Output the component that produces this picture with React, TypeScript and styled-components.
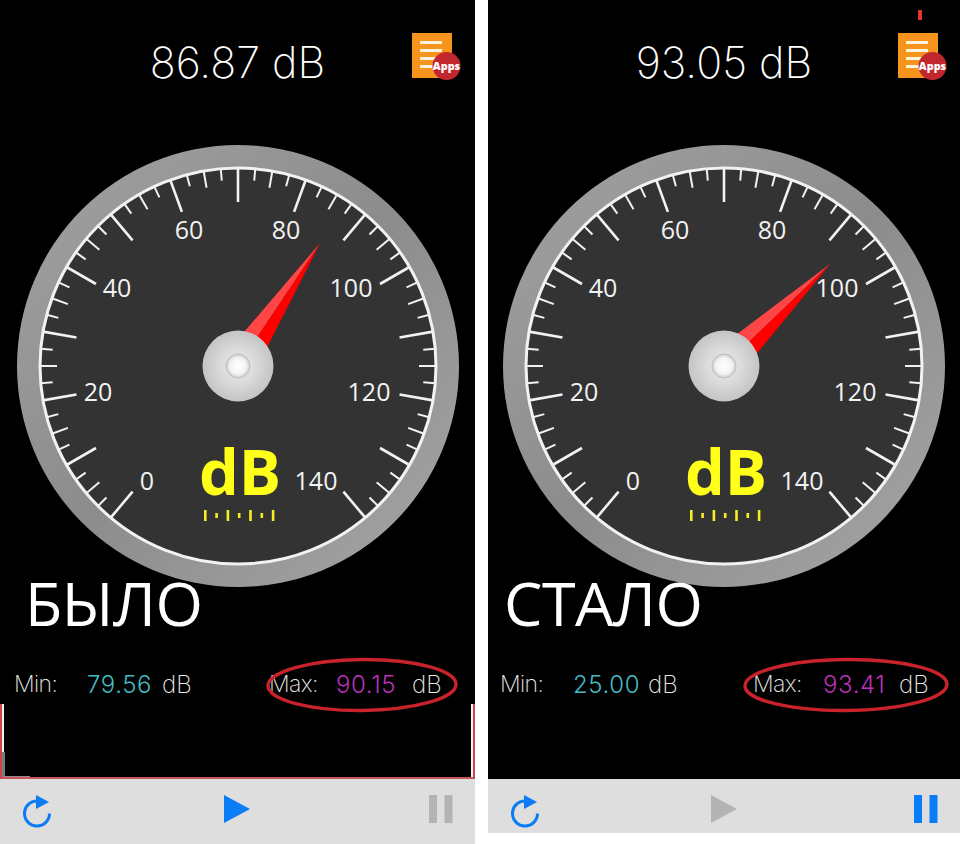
import React from "react";
import styled, { createGlobalStyle } from "styled-components";

const TICK_LABELS = [
  { text: "0", dx: -91, dy: 115 },
  { text: "20", dx: -140, dy: 26 },
  { text: "40", dx: -121, dy: -78 },
  { text: "60", dx: -49, dy: -136 },
  { text: "80", dx: 48, dy: -136 },
  { text: "100", dx: 113, dy: -78 },
  { text: "120", dx: 131, dy: 26 },
  { text: "140", dx: 78, dy: 115 },
];

const CX = 238;
const CY = 226;

// scale runs from -140deg (0 dB) to +140deg (140 dB), one tick per 2.5 dB
const ticks = Array.from({ length: 57 }, (_, i) => {
  const angle = -140 + i * 5;
  const length = i % 4 === 0 ? 34 : i % 2 === 0 ? 17 : 12;
  return { angle, length, major: i % 4 === 0 };
});

const ruler = [0, 1, 2, 3, 4, 5, 6];

const Gauge = ({ angle, recording }: { angle: number; recording?: boolean }) => (
  <GaugeSvg viewBox="0 0 475 450" $recording={recording}>
    <defs>
      <linearGradient id="bezel" x1="0" y1="0" x2="1" y2="1">
        <stop offset="0" stopColor="#a2a2a2" />
        <stop offset="0.5" stopColor="#8c8c8c" />
        <stop offset="1" stopColor="#a6a6a6" />
      </linearGradient>
      <radialGradient id="hub" cx="0.5" cy="0.5" r="0.5">
        <stop offset="0" stopColor="#f0f0f0" />
        <stop offset="1" stopColor="#c4c4c4" />
      </radialGradient>
      <radialGradient id="cap" cx="0.5" cy="0.5" r="0.5">
        <stop offset="0" stopColor="#ffffff" />
        <stop offset="0.7" stopColor="#f2f2f2" />
        <stop offset="1" stopColor="#c8c8c8" />
      </radialGradient>
    </defs>
    <circle cx={CX} cy={CY} r={221} fill="url(#bezel)" />
    <circle cx={CX} cy={CY} r={198} fill="#333333" stroke="#f2f2f2" strokeWidth={3} />
    {ticks.map((t) => (
      <line
        key={t.angle}
        x1={CX}
        y1={CY - 198}
        x2={CX}
        y2={CY - 198 + t.length}
        stroke="#f2f2f2"
        strokeWidth={t.major ? 2.6 : 2}
        transform={`rotate(${t.angle} ${CX} ${CY})`}
      />
    ))}
    {TICK_LABELS.map((l) => (
      <ScaleLabel key={l.text} x={CX + l.dx} y={CY + l.dy + 9}>
        {l.text}
      </ScaleLabel>
    ))}
    <g transform={`rotate(${angle} ${CX} ${CY})`}>
      <polygon points={`${CX},${CY - 148} ${CX - 14},${CY - 30} ${CX},${CY - 30}`} fill="#ff4646" />
      <polygon points={`${CX},${CY - 148} ${CX + 14},${CY - 30} ${CX},${CY - 30}`} fill="#ff0000" />
    </g>
    <circle cx={CX} cy={CY} r={35.5} fill="url(#hub)" />
    <circle cx={CX} cy={CY} r={12} fill="url(#cap)" stroke="#c0c0c0" strokeWidth={1} />
    <UnitLabel x={CX + 2} y={355}>dB</UnitLabel>
    {ruler.map((i) => (
      <rect
        key={i}
        x={204 + i * 11.3}
        y={i % 2 === 0 ? 370 : 373}
        width={2.6}
        height={i % 2 === 0 ? 11 : 5}
        fill="#f5ee20"
      />
    ))}
  </GaugeSvg>
);

const AppsBadge = ({ recording }: { recording?: boolean }) => (
  <BadgeSvg viewBox="0 0 50 47" $recording={recording}>
    <rect x="0" y="0" width="40" height="45" fill="#f7941e" />
    <rect x="8" y="8" width="22" height="3" fill="#fdf2dc" />
    <rect x="8" y="16" width="22" height="3" fill="#fdf2dc" />
    <rect x="8" y="24" width="22" height="3" fill="#fdf2dc" />
    <rect x="8" y="32" width="22" height="3" fill="#fdf2dc" />
    <circle cx="34.5" cy="33" r="14" fill="#c1272d" />
    <BadgeText x="34.5" y="36.8">Apps</BadgeText>
  </BadgeSvg>
);

const RefreshIcon = () => (
  <svg width="30" height="33" viewBox="0 0 30 33">
    <path d="M26.5 18.5A12.5 12.5 0 1 1 14 6" fill="none" stroke="#0a7cf5" strokeWidth="3" />
    <polygon points="13,0 26,7 13,14" fill="#0a7cf5" />
  </svg>
);

const PlayIcon = ({ color }: { color: string }) => (
  <PlaySvg viewBox="0 0 26 28">
    <polygon points="0,0 26,14 0,28" fill={color} />
  </PlaySvg>
);

const PauseIcon = ({ color }: { color: string }) => (
  <svg width="24" height="28" viewBox="0 0 24 28">
    <rect x="0" y="0" width="8" height="28" fill={color} />
    <rect x="15.5" y="0" width="8" height="28" fill={color} />
  </svg>
);

interface MeterProps {
  reading: string;
  angle: number;
  caption: string;
  min: string;
  max: string;
  recording?: boolean;
}

const Meter = ({ reading, angle, caption, min, max, recording }: MeterProps) => {
  const ringWidth = recording ? 206 : 192;
  return (
    <Panel $recording={recording}>
      {recording && <LevelMark />}
      <Header>
        <span />
        <Reading>{reading} dB</Reading>
        <AppsBadge recording={recording} />
      </Header>
      <Gauge angle={angle} recording={recording} />
      <Caption $recording={recording}>{caption}</Caption>
      <Stats $recording={recording}>
        <Label>Min:</Label>
        <MinValue>{min}</MinValue>
        <Unit>dB</Unit>
        <MaxLabel $recording={recording}>Max:</MaxLabel>
        <MaxValue>{max}</MaxValue>
        <Unit>dB</Unit>
        <Circled viewBox={`0 0 ${ringWidth} 56`} $width={ringWidth} $recording={recording}>
          <ellipse
            cx={ringWidth / 2}
            cy="28"
            rx={ringWidth / 2 - 2}
            ry="25.5"
            fill="none"
            stroke="#c8222b"
            strokeWidth="3.4"
          />
        </Circled>
      </Stats>
      <Graph $active={!recording}>{!recording && <GraphLevel />}</Graph>
      <Toolbar>
        <RefreshIcon />
        <PlayIcon color={recording ? "#b3b3b3" : "#0a7cf5"} />
        <PauseIcon color={recording ? "#0a7cf5" : "#b3b3b3"} />
      </Toolbar>
    </Panel>
  );
};

const App = () => (
  <>
    <GlobalStyle />
    <Root>
      <Meter reading="86.87" angle={33.74} caption="БЫЛО" min="79.56" max="90.15" />
      <Meter reading="93.05" angle={46.1} caption="СТАЛО" min="25.00" max="93.41" recording />
    </Root>
  </>
);

const GlobalStyle = createGlobalStyle`
  html, body {
    margin: 0;
    padding: 0;
    background: #ffffff;
  }
`;

const Root = styled.div`
  display: flex;
  justify-content: space-between;
  align-items: flex-start;
  width: 960px;
  height: 844px;
  overflow: hidden;
  background: #ffffff;
`;

const Panel = styled.div<{ $recording?: boolean }>`
  position: relative;
  display: flex;
  flex-direction: column;
  width: ${(p) => (p.$recording ? "472px" : "475px")};
  height: ${(p) => (p.$recording ? "833px" : "844px")};
  background: #000000;
`;

const LevelMark = styled.div`
  position: absolute;
  top: 10px;
  left: 430px;
  width: 4px;
  height: 10px;
  background: #e5352b;
`;

const Header = styled.div`
  display: grid;
  grid-template-columns: 1fr auto 1fr;
  align-items: start;
  height: 140px;
`;

const Reading = styled.div`
  margin-top: 38px;
  font-family: "Inter", "Liberation Sans", sans-serif;
  font-size: 43px;
  line-height: 48px;
  font-weight: 200;
  color: #ffffff;
  white-space: nowrap;
`;

const BadgeSvg = styled.svg<{ $recording?: boolean }>`
  justify-self: end;
  width: 50px;
  height: 47px;
  margin: 33px ${(p) => (p.$recording ? "12px" : "13px")} 0 0;
`;

const BadgeText = styled.text`
  font-family: "Open Sans", sans-serif;
  font-size: 10.8px;
  font-weight: 800;
  fill: #ffffff;
  text-anchor: middle;
`;

const GaugeSvg = styled.svg<{ $recording?: boolean }>`
  display: block;
  width: 475px;
  height: 450px;
  flex-shrink: 0;
  margin-left: ${(p) => (p.$recording ? "-2px" : "0")};
`;

const ScaleLabel = styled.text`
  font-family: "Open Sans", sans-serif;
  font-size: 25px;
  fill: #f2f2f2;
  text-anchor: middle;
`;

const UnitLabel = styled.text`
  font-family: "Open Sans", sans-serif;
  font-size: 63px;
  font-weight: 700;
  fill: #ffff1a;
  text-anchor: middle;
`;

const Caption = styled.div<{ $recording?: boolean }>`
  height: 60px;
  padding-left: ${(p) => (p.$recording ? "16px" : "25px")};
  font-family: "Open Sans", sans-serif;
  font-size: 61px;
  line-height: 26px;
  color: #ffffff;
  letter-spacing: -0.5px;
`;

const Stats = styled.div<{ $recording?: boolean }>`
  position: relative;
  display: flex;
  align-items: center;
  height: 54px;
  padding: 14px 0 0 ${(p) => (p.$recording ? "12px" : "14px")};
  box-sizing: border-box;
  font-family: "Inter", "Liberation Sans", sans-serif;
  font-size: 24px;
  font-weight: 200;
  color: #e6e6e6;
`;

const Label = styled.span`
  width: 73px;
  font-size: 23px;
  letter-spacing: -0.6px;
`;

const MinValue = styled.span`
  width: 75px;
  color: #45bac2;
  font-weight: 300;
  letter-spacing: 0.6px;
`;

const Unit = styled.span`
  width: 30px;
`;

const MaxLabel = styled(Label)<{ $recording?: boolean }>`
  width: ${(p) => (p.$recording ? "70px" : "67px")};
  margin-left: ${(p) => (p.$recording ? "75px" : "77px")};
`;

const MaxValue = styled.span`
  width: 76px;
  color: #b832b8;
  font-weight: 300;
  letter-spacing: 0.6px;
`;

const Circled = styled.svg<{ $recording?: boolean; $width: number }>`
  position: absolute;
  left: ${(p) => (p.$recording ? "255px" : "266px")};
  top: 7px;
  width: ${(p) => p.$width}px;
  height: 56px;
  transform: rotate(-0.5deg);
`;

const Graph = styled.div<{ $active?: boolean }>`
  position: relative;
  height: 75px;
  box-sizing: border-box;
  ${(p) =>
    p.$active &&
    `
    border-left: 2px solid #c9474c;
    border-right: 2px solid #c9474c;
    border-bottom: 2px solid #c9565b;
    box-shadow: inset 2px 0 0 #f2f2f2, inset -2px 0 0 #f2f2f2;
  `}
`;

const GraphLevel = styled.div`
  position: absolute;
  left: 0;
  bottom: 0;
  width: 28px;
  height: 25px;
  border-left: 3px solid #7a7a7a;
  border-bottom: 1px solid #9a8a8a;
  box-sizing: border-box;
`;

const PlaySvg = styled.svg`
  width: 26px;
  height: 28px;
  margin-right: 8px;
`;

const Toolbar = styled.div`
  display: flex;
  justify-content: space-between;
  align-items: flex-start;
  flex: 1;
  padding: 16px 22px 0 23px;
  box-sizing: border-box;
  background: #dedede;
`;

export default App;
